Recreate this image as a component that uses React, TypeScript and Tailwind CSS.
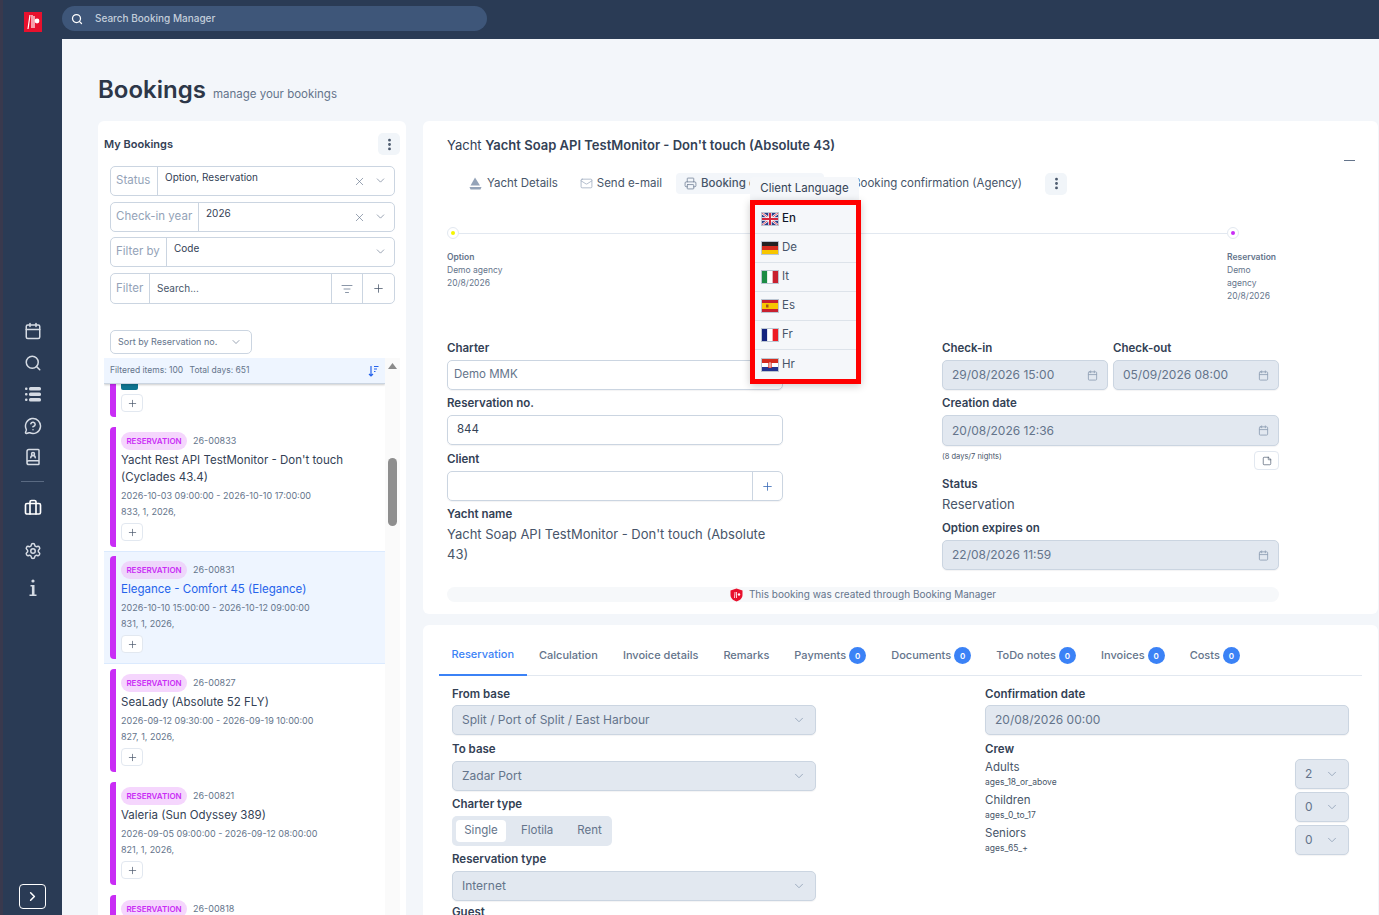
import {
  BookUser,
  Briefcase,
  Calendar,
  ChevronDown,
  ChevronRight,
  EllipsisVertical,
  Info,
  ListFilter,
  Mail,
  MessageCircleQuestionMark,
  Plus,
  Printer,
  Search,
  Settings,
  StickyNote,
  X,
} from "lucide-react";
import type { ReactNode } from "react";

const inputBase = "flex h-[30px] items-center rounded-[5px] border border-[#cbd5e1] shadow-[0_1px_1px_rgba(15,23,42,0.05)]";
const disabledBase = `${inputBase} bg-[#e2e8f0] text-[12px] text-[#64748b]`;

function Label({ children, className = "" }: { children: ReactNode; className?: string }) {
  return <div className={`h-4 text-[11.5px] leading-4 font-semibold text-[#334155] ${className}`}>{children}</div>;
}

function DateField({ value, className = "" }: { value: string; className?: string }) {
  return (
    <div className={`${disabledBase} justify-between pr-[9px] pl-[9px] ${className}`}>
      <span>{value}</span>
      <Calendar size={11} className="text-[#94a3b8]" />
    </div>
  );
}

function SelectField({ value, className = "" }: { value: string; className?: string }) {
  return (
    <div className={`${disabledBase} justify-between pr-[9px] pl-[9px] ${className}`}>
      <span>{value}</span>
      <ChevronDown size={14} strokeWidth={1.5} className="text-[#94a3b8]" />
    </div>
  );
}

function FilterRow({ label, value, clear, top, width }: { label: string; value: string; clear?: boolean; top: string; width: string }) {
  return (
    <div className={`flex h-[30px] w-[285px] rounded-[5px] border border-[#cbd5e1] ${top}`}>
      <div className={`flex items-center border-r border-[#cbd5e1] pl-[5px] text-[11.5px] text-[#94a3b8] ${width}`}>{label}</div>
      <div className="flex-1 pt-[3px] pl-[7px] text-[10px] leading-[15px] text-[#334155]">{value}</div>
      {clear && <X size={13} strokeWidth={1.2} className="mt-[8px] mr-[8px] text-[#64748b]" />}
      <ChevronDown size={13} strokeWidth={1.2} className="mt-[7px] mr-[7px] text-[#64748b]" />
    </div>
  );
}

function PlusButton({ className = "" }: { className?: string }) {
  return (
    <div className={`flex h-[18px] w-[22px] items-center justify-center rounded-[4px] border border-[#e2e8f0] bg-white text-[#475569] ${className}`}>
      <Plus size={11} strokeWidth={1.5} />
    </div>
  );
}

type Booking = { code: string; title: string[]; dates: string; meta: string; selected?: boolean };

const bookings: Booking[] = [
  { code: "26-00833", title: ["Yacht Rest API TestMonitor - Don't touch", "(Cyclades 43.4)"], dates: "2026-10-03 09:00:00 - 2026-10-10 17:00:00", meta: "833, 1, 2026," },
  { code: "26-00831", title: ["Elegance - Comfort 45 (Elegance)"], dates: "2026-10-10 15:00:00 - 2026-10-12 09:00:00", meta: "831, 1, 2026,", selected: true },
  { code: "26-00827", title: ["SeaLady (Absolute 52 FLY)"], dates: "2026-09-12 09:30:00 - 2026-09-19 10:00:00", meta: "827, 1, 2026," },
  { code: "26-00821", title: ["Valeria (Sun Odyssey 389)"], dates: "2026-09-05 09:00:00 - 2026-09-12 08:00:00", meta: "821, 1, 2026," },
  { code: "26-00818", title: ["Blue Horizon (Oceanis 46.1)"], dates: "2026-08-29 09:00:00 - 2026-09-05 08:00:00", meta: "818, 1, 2026," },
];

function BookingItem({ b }: { b: Booking }) {
  return (
    <div className={b.selected ? "-mt-px border-y border-[#dbeafe] bg-[#eef5ff] py-[4px] pl-[6px]" : "py-[5px] pl-[6px]"}>
      <div className="flex">
        <div className="w-[6px] shrink-0 rounded-l-[4px] bg-[#c92df5]" />
        <div className="pt-[5px] pb-[6px] pl-[5px]">
          <div className="flex h-[18px] items-center gap-[6px]">
            <span className={`flex h-[18px] w-[66px] items-center justify-center rounded-full text-[8px] font-semibold text-[#c92df5] ${b.selected ? "bg-[#eed6fb]" : "bg-[#f5d6fd]"}`}>RESERVATION</span>
            <span className="text-[9px] text-[#64748b]">{b.code}</span>
          </div>
          <div className={`mt-[2px] text-[11.5px] leading-[17px] ${b.selected ? "text-[#2563eb]" : "text-[#334155]"}`}>
            {b.title.map((t) => (
              <div key={t}>{t}</div>
            ))}
          </div>
          <div className="mt-[3px] text-[9px] leading-[13px] text-[#64748b]">{b.dates}</div>
          <div className="mt-[3px] text-[9px] leading-[13px] text-[#64748b]">{b.meta}</div>
          <PlusButton className="mt-[5px]" />
        </div>
      </div>
    </div>
  );
}

function Sidebar() {
  return (
    <aside className="flex w-[62px] shrink-0 flex-col items-center border-l-[3px] border-[#39394d] bg-[#2a3b55] text-[#d5dbe4]">
      <svg width="18" height="20" viewBox="0 0 18 20" className="mt-[12px] shrink-0">
        <rect width="18" height="20" fill="#e8112d" />
        <path d="M6 3 L4 17 M8 3 V16 M10 4 V16" stroke="#fff" strokeWidth="1.2" fill="none" />
        <circle cx="13" cy="9" r="2.4" fill="#fff" />
      </svg>
      <Calendar size={18} strokeWidth={2} className="mt-[290px]" />
      <Search size={18} strokeWidth={2} className="mt-[14px]" />
      <svg width="18" height="18" viewBox="0 0 18 18" fill="currentColor" className="mt-[13px]">
        <rect x="1" y="2.5" width="2.5" height="2.5" rx="1" />
        <rect x="5" y="2" width="12" height="3.5" rx="1.5" />
        <rect x="1" y="8" width="2.5" height="2.5" rx="1" />
        <rect x="5" y="7.5" width="12" height="3.5" rx="1.5" />
        <rect x="1" y="13.5" width="2.5" height="2.5" rx="1" />
        <rect x="5" y="13" width="12" height="3.5" rx="1.5" />
      </svg>
      <MessageCircleQuestionMark size={18} strokeWidth={2} className="mt-[14px]" />
      <BookUser size={18} strokeWidth={2} className="mt-[13px]" />
      <div className="mt-[15px] h-px w-[23px] bg-[#5a6a82]" />
      <Briefcase size={18} strokeWidth={2.2} className="mt-[17px] text-white" />
      <Settings size={18} strokeWidth={2} className="mt-[25px]" />
      <Info size={0} className="hidden" />
      <svg width="8" height="18" viewBox="0 0 8 18" fill="currentColor" className="mt-[19px]">
        <circle cx="4" cy="2" r="1.6" />
        <path d="M1.5 6h4v9.5H7.5V17h-7v-1.5h2.4V7.5H1.5z" />
      </svg>
      <div className="mt-auto mb-[6px] flex h-[25px] w-[27px] items-center justify-center rounded-[4px] border border-white text-white">
        <ChevronRight size={15} strokeWidth={2.5} />
      </div>
    </aside>
  );
}

function BookingsPanel() {
  return (
    <section className="flex h-[794px] w-[308px] shrink-0 flex-col rounded-t-[6px] bg-white pt-[12px] pl-[6px]">
      <div className="flex h-[22px] w-[296px] items-center justify-between">
        <span className="text-[11px] font-semibold text-[#334155]">My Bookings</span>
        <div className="flex h-[22px] w-[22px] items-center justify-center rounded-[5px] bg-[#f1f5f9] text-[#475569]">
          <EllipsisVertical size={15} strokeWidth={2.5} />
        </div>
      </div>
      <div className="ml-[6px]">
        <FilterRow label="Status" value="Option, Reservation" clear top="mt-[11px]" width="w-[47px]" />
        <FilterRow label="Check-in year" value="2026" clear top="mt-[6px]" width="w-[88px]" />
        <FilterRow label="Filter by" value="Code" top="mt-[5px]" width="w-[56px]" />
        <div className="mt-[6px] flex h-[31px] w-[285px] rounded-[5px] border border-[#cbd5e1]">
          <div className="flex w-[39px] items-center border-r border-[#cbd5e1] pl-[5px] text-[11.5px] text-[#94a3b8]">Filter</div>
          <div className="flex flex-1 items-center pl-[7px] text-[10px] text-[#475569]">Search...</div>
          <div className="flex w-[32px] items-center justify-center border-x border-[#cbd5e1] text-[#64748b]">
            <ListFilter size={12} strokeWidth={1.5} />
          </div>
          <div className="flex w-[31px] items-center justify-center text-[#475569]">
            <Plus size={13} strokeWidth={1.4} />
          </div>
        </div>
        <div className="mt-[26px] flex h-[24px] w-[142px] items-center justify-between rounded-[5px] border border-[#cbd5e1] pr-[9px] pl-[7px] text-[9px] text-[#64748b]">
          <span>Sort by Reservation no.</span>
          <ChevronDown size={12} strokeWidth={1.3} />
        </div>
      </div>
      <div className="mt-[4px] flex min-h-0 w-[296px] flex-1">
        <div className="flex w-[281px] flex-col overflow-hidden">
          <div className="z-10 flex h-[26px] shrink-0 items-center justify-between border-b border-[#cbd5e1] bg-[#eef5ff] pr-[6px] pl-[6px] text-[8.5px] text-[#64748b] shadow-[0_1px_2px_rgba(0,0,0,0.2)]">
            <span>
              Filtered items: 100 <span className="ml-[4px]">Total days: 651</span>
            </span>
            <svg width="11" height="12" viewBox="0 0 11 12" fill="none" stroke="#2563eb" strokeWidth="1.2">
              <path d="M3 1v10M1 9l2 2 2-2M6 1.5h4.5M6 4h3M6 6.5h1.5" />
            </svg>
          </div>
          <div className="py-[0] pl-[6px]">
            <div className="flex h-[33px]">
              <div className="w-[6px] rounded-bl-[4px] bg-[#c92df5]" />
              <div className="pl-[5px]">
                <div className="h-[6px] w-[17px] rounded-b-[2px] bg-[#0e7490]" />
                <PlusButton className="mt-[4px]" />
              </div>
            </div>
          </div>
          <div className="h-[5px] shrink-0" />
          {bookings.map((b) => (
            <BookingItem key={b.code} b={b} />
          ))}
        </div>
        <div className="flex w-[15px] flex-col items-center bg-[#fafafa] pt-[5px]">
          <svg width="9" height="6" viewBox="0 0 9 6" fill="#8a8a8a">
            <path d="M4.5 0L9 6H0z" />
          </svg>
          <div className="mt-[89px] h-[68px] w-[9px] rounded-full bg-[#8e8e8e]" />
        </div>
      </div>
    </section>
  );
}

function Flag({ code }: { code: string }) {
  return (
    <svg width="16" height="12" viewBox="0 0 16 12" className="shrink-0 outline outline-[#94a3b8]/60">
      {code === "En" && (
        <>
          <rect width="16" height="12" fill="#2b3f8c" />
          <path d="M0 0L16 12M16 0L0 12" stroke="#fff" strokeWidth="2.2" />
          <path d="M0 0L16 12M16 0L0 12" stroke="#d7263d" strokeWidth="0.8" />
          <path d="M8 0V12M0 6H16" stroke="#fff" strokeWidth="3.4" />
          <path d="M8 0V12M0 6H16" stroke="#d7263d" strokeWidth="2" />
        </>
      )}
      {code === "De" && (
        <>
          <rect width="16" height="4" fill="#222" />
          <rect y="4" width="16" height="4" fill="#d52b1e" />
          <rect y="8" width="16" height="4" fill="#f7c600" />
        </>
      )}
      {code === "It" && (
        <>
          <rect width="5.33" height="12" fill="#1c8c45" />
          <rect x="5.33" width="5.33" height="12" fill="#fff" />
          <rect x="10.66" width="5.34" height="12" fill="#c8202f" />
        </>
      )}
      {code === "Es" && (
        <>
          <rect width="16" height="12" fill="#c8202f" />
          <rect y="3" width="16" height="6" fill="#f7c600" />
          <rect x="4" y="4.5" width="2.5" height="3" fill="#a3521c" />
        </>
      )}
      {code === "Fr" && (
        <>
          <rect width="5.33" height="12" fill="#14247e" />
          <rect x="5.33" width="5.33" height="12" fill="#fff" />
          <rect x="10.66" width="5.34" height="12" fill="#ed1c24" />
        </>
      )}
      {code === "Hr" && (
        <>
          <rect width="16" height="4" fill="#d52b1e" />
          <rect y="4" width="16" height="4" fill="#fff" />
          <rect y="8" width="16" height="4" fill="#24348f" />
          <rect x="6" y="3" width="4" height="6" fill="#d52b1e" />
          <path d="M6 5h4M6 7h4M8 3v6" stroke="#fff" strokeWidth="0.7" />
        </>
      )}
    </svg>
  );
}

function LanguageMenu() {
  return (
    <div className="absolute top-[56px] left-[327px] z-20 w-[111px]">
      <div className="flex h-[23px] w-[109px] items-center justify-center rounded-t-[4px] bg-[#f5f7fa] text-[11.5px] text-[#334155]">Client Language</div>
      <div className="border-[5px] border-[#ff0000] bg-[#f5f7fa] shadow-[0_2px_8px_rgba(0,0,0,0.2)]">
        {["En", "De", "It", "Es", "Fr", "Hr"].map((code, i) => (
          <div key={code} className={`flex h-[29px] items-center gap-[4px] pl-[7px] text-[11.5px] ${i < 5 ? "border-b border-[#dde3ea]" : ""} ${i === 0 ? "font-medium text-[#0f172a]" : "text-[#475569]"}`}>
            <Flag code={code} />
            {code}
          </div>
        ))}
      </div>
    </div>
  );
}

function Toolbar() {
  return (
    <div className="mt-[19px] flex h-[21px] items-center text-[11.5px] text-[#475569]">
      <svg width="13" height="13" viewBox="0 0 13 13" fill="#94a3b8" className="ml-[22px]">
        <path d="M6 0.5L11 8.5H1.5z" />
        <path d="M0.5 10H12.5L11.5 12.5H1.5z" />
      </svg>
      <span className="ml-[5px]">Yacht Details</span>
      <Mail size={13} strokeWidth={1.3} className="ml-[22px] text-[#94a3b8]" />
      <span className="ml-[4px]">Send e-mail</span>
      <div className="ml-[14px] flex h-[21px] w-[148px] items-center rounded-[4px] bg-[#f3f6fa] pl-[8px]">
        <Printer size={13} strokeWidth={1.3} className="text-[#64748b]" />
        <span className="ml-[4px] font-medium">Booking confirmation</span>
      </div>
      <span className="ml-[29px]">Booking confirmation (Agency)</span>
      <div className="ml-[23px] flex h-[22px] w-[22px] items-center justify-center rounded-[5px] bg-[#f1f5f9] text-[#475569]">
        <EllipsisVertical size={15} strokeWidth={2.5} />
      </div>
    </div>
  );
}

function TimelineDot({ color }: { color: string }) {
  return (
    <div className="flex h-[12px] w-[12px] shrink-0 items-center justify-center rounded-full border border-[#e2e8f0] bg-white">
      <div className={`h-[4px] w-[4px] rounded-full ${color}`} />
    </div>
  );
}

function DetailPanel() {
  return (
    <section className="relative w-[955px] rounded-[6px] bg-white pt-[15px] pb-[12px] pl-[24px]">
      <div className="relative flex h-[18px] w-[908px] items-center justify-between text-[13px] leading-[18px] text-[#334155]">
        <span>
          Yacht <span className="font-semibold">Yacht Soap API TestMonitor - Don't touch (Absolute 43)</span>
        </span>
        <div className="mt-[30px] h-px w-[11px] bg-[#64748b]" />
      </div>
      <Toolbar />
      <LanguageMenu />
      <div className="mt-[33px] flex w-[792px] items-center">
        <TimelineDot color="bg-[#f5f500]" />
        <div className="h-px flex-1 bg-[#e2e8f0]" />
        <TimelineDot color="bg-[#c92df5]" />
      </div>
      <div className="mt-[12px] flex h-[53px] w-[832px] justify-between text-[8.5px] leading-[13px] text-[#64748b]">
        <div>
          <div className="font-semibold">Option</div>
          <div>Demo agency</div>
          <div>20/8/2026</div>
        </div>
        <div className="w-[52px]">
          <div className="font-semibold">Reservation</div>
          <div>Demo agency</div>
          <div>20/8/2026</div>
        </div>
      </div>
      <div className="mt-[36px] flex w-[832px] justify-between">
        <div className="w-[336px]">
          <Label>Charter</Label>
          <div className={`${inputBase} mt-[4px] pl-[6px] text-[11.5px] text-[#64748b]`}>Demo MMK</div>
          <Label className="mt-[5px]">Reservation no.</Label>
          <div className={`${inputBase} mt-[4px] pl-[9px] text-[11.5px] text-[#334155]`}>844</div>
          <Label className="mt-[6px]">Client</Label>
          <div className={`${inputBase} mt-[4px] h-[26px] justify-end`}>
            <div className="flex h-full w-[30px] items-center justify-center border-l border-[#cbd5e1] text-[#3b6cb7]">
              <Plus size={13} strokeWidth={1.5} />
            </div>
          </div>
          <Label className="mt-[5px]">Yacht name</Label>
          <div className="mt-[2px] text-[13px] leading-[20px] text-[#475569]">Yacht Soap API TestMonitor - Don't touch (Absolute 43)</div>
        </div>
        <div className="w-[337px]">
          <div className="flex gap-[5px]">
            <div className="w-[166px]">
              <Label>Check-in</Label>
              <DateField value="29/08/2026 15:00" className="mt-[4px]" />
            </div>
            <div className="w-[166px]">
              <Label>Check-out</Label>
              <DateField value="05/09/2026 08:00" className="mt-[4px]" />
            </div>
          </div>
          <Label className="mt-[5px]">Creation date</Label>
          <DateField value="20/08/2026 12:36" className="mt-[4px] h-[31px]" />
          <div className="mt-[5px] flex items-start justify-between">
            <span className="text-[7.5px] leading-[11px] text-[#475569]">(8 days/7 nights)</span>
            <div className="flex h-[19px] w-[25px] items-center justify-center rounded-[4px] border border-[#e2e8f0] text-[#475569]">
              <StickyNote size={10} strokeWidth={1.6} />
            </div>
          </div>
          <Label className="mt-[6px]">Status</Label>
          <div className="mt-[2px] text-[13px] leading-[20px] text-[#475569]">Reservation</div>
          <Label className="mt-[6px]">Option expires on</Label>
          <DateField value="22/08/2026 11:59" className="mt-[4px]" />
        </div>
      </div>
      <div className="mt-[17px] flex h-[15px] w-[832px] items-center justify-center rounded-full bg-[#f6f8fa] text-[10px] text-[#64748b]">
        <svg width="13" height="14" viewBox="0 0 13 14" className="mr-[6px]">
          <path d="M6.5 0.5L12.5 2.5V7C12.5 10.5 9.5 12.5 6.5 13.5C3.5 12.5 0.5 10.5 0.5 7V2.5z" fill="#e8112d" />
          <path d="M5 4L4.5 10M6.5 4V10" stroke="#fff" strokeWidth="0.8" />
          <circle cx="9" cy="6.5" r="1.2" fill="#fff" />
        </svg>
        This booking was created through Booking Manager
      </div>
    </section>
  );
}

const tabs = [
  { name: "Reservation", active: true },
  { name: "Calculation" },
  { name: "Invoice details" },
  { name: "Remarks" },
  { name: "Payments", badge: true },
  { name: "Documents", badge: true },
  { name: "ToDo notes", badge: true },
  { name: "Invoices", badge: true },
  { name: "Costs", badge: true },
];

function CrewRow({ name, hint, value }: { name: string; hint: string; value: string }) {
  return (
    <div className="mt-[2px] flex h-[31px] items-start justify-between">
      <div>
        <div className="text-[11.5px] leading-[16px] text-[#475569]">{name}</div>
        <div className="text-[8.5px] leading-[14px] text-[#475569]">{hint}</div>
      </div>
      <SelectField value={value} className="w-[54px]" />
    </div>
  );
}

function TabsPanel() {
  return (
    <section className="mt-[11px] w-[955px] flex-1 rounded-t-[6px] bg-white pt-[10px] pl-[16px]">
      <div className="flex h-[41px] w-[923px] border-b border-[#e2e8f0] text-[11px] font-medium text-[#64748b]">
        {tabs.map((t) => (
          <div key={t.name} className={`-mb-px flex items-center gap-[3px] px-[12.5px] ${t.active ? "border-b-2 border-[#3b82f6] text-[#3b82f6]" : ""}`}>
            {t.name}
            {t.badge && <span className="flex h-[17px] w-[17px] items-center justify-center rounded-full bg-[#3b82f6] text-[8px] font-semibold text-white">0</span>}
          </div>
        ))}
      </div>
      <div className="mt-[10px] ml-[13px] flex w-[897px] justify-between">
        <div className="w-[364px]">
          <Label>From base</Label>
          <SelectField value="Split / Port of Split / East Harbour" className="mt-[3px]" />
          <Label className="mt-[6px]">To base</Label>
          <SelectField value="Zadar Port" className="mt-[4px]" />
          <Label className="mt-[5px]">Charter type</Label>
          <div className="mt-[4px] flex h-[30px] w-[160px] items-center rounded-[5px] bg-[#e2e8f0] pl-[4px] text-[11.5px] text-[#64748b]">
            <span className="flex h-[22px] w-[50px] items-center justify-center rounded-[4px] bg-white">Single</span>
            <span className="ml-[15px]">Flotila</span>
            <span className="ml-[24px]">Rent</span>
          </div>
          <Label className="mt-[5px]">Reservation type</Label>
          <SelectField value="Internet" className="mt-[4px]" />
          <Label className="mt-[3px]">Guest</Label>
        </div>
        <div className="w-[364px]">
          <Label>Confirmation date</Label>
          <div className={`${disabledBase} mt-[3px] pl-[9px]`}>20/08/2026 00:00</div>
          <Label className="mt-[6px]">Crew</Label>
          <div className="mt-[2px]">
            <CrewRow name="Adults" hint="ages_18_or_above" value="2" />
            <CrewRow name="Children" hint="ages_0_to_17" value="0" />
            <CrewRow name="Seniors" hint="ages_65_+" value="0" />
          </div>
        </div>
      </div>
    </section>
  );
}

export default function App() {
  return (
    <div className="flex h-[915px] w-[1379px] overflow-hidden bg-[#f3f6fa] font-['Inter',sans-serif]">
      <Sidebar />
      <div className="flex min-w-0 flex-1 flex-col">
        <header className="flex h-[39px] shrink-0 items-center bg-[#2a3b55] pb-[2px]">
          <div className="flex h-[25px] w-[425px] items-center rounded-full bg-[#3e5679] pl-[9px] text-[10px] font-medium text-[#c3cedb]">
            <Search size={12} strokeWidth={2.5} className="text-white" />
            <span className="ml-[12px]">Search Booking Manager</span>
          </div>
        </header>
        <main className="min-h-0 flex-1 pt-[35px] pl-[36px]">
          <div className="flex h-[32px] items-baseline gap-[7px]">
            <h1 className="text-[24px] leading-[32px] font-semibold text-[#2d3748]">Bookings</h1>
            <span className="text-[11.5px] text-[#64748b]">manage your bookings</span>
          </div>
          <div className="mt-[15px] flex gap-[17px]">
            <BookingsPanel />
            <div className="flex h-[794px] flex-col overflow-hidden">
              <DetailPanel />
              <TabsPanel />
            </div>
          </div>
        </main>
      </div>
    </div>
  );
}
